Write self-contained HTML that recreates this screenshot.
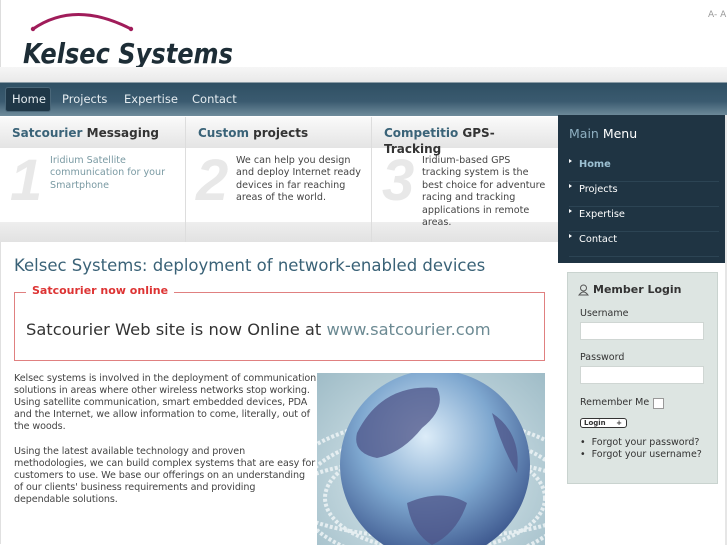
<!DOCTYPE html>
<html><head><meta charset="utf-8"><style>
*{margin:0;padding:0;box-sizing:border-box}
html,body{width:727px;height:545px;overflow:hidden}
body{background:#fff;font-family:"DejaVu Sans","Liberation Sans",sans-serif;position:relative;color:#333}
.abs{position:absolute}
#hdr{left:0;top:0;width:727px;height:68px;background:#fff;border-left:1px solid #ddd}
#band{left:0;top:67px;width:727px;height:15px;background:linear-gradient(#f6f6f6,#e9e9e9)}
#nav{left:0;top:82px;width:727px;height:34px;background:linear-gradient(#2f5064 0%,#3a5a6f 55%,#6f8c9c 100%);border-top:1px solid #8a9ca6}
#nav span{position:absolute;top:9px;font-size:11.5px;color:#e6edf1}
#home{left:5px;top:4px;width:46px;height:25px;background:#1f3747;border:1px solid #4a6779;border-radius:3px}
.col{top:117px;height:125px;background:#fff}
.ch{position:absolute;left:0;top:0;width:100%;height:31px;background:linear-gradient(#fafafa,#e4e4e4)}
.cb{position:absolute;left:0;bottom:0;width:100%;height:20px;background:linear-gradient(#eee,#e2e2e2)}
.ct{position:absolute;left:12px;top:8px;font-size:12px;font-weight:bold;color:#333;white-space:nowrap;line-height:16px}
.ct b{color:#3a6378}
.num{position:absolute;font:italic bold 58px "Liberation Sans",sans-serif;color:#e8e8e8;top:30px}
.cx{position:absolute;top:38px;font-size:9.6px;line-height:12.4px;color:#444}
#side{left:558px;top:115px;width:169px;height:148px;background:#1f3443}
#side .t{position:absolute;left:11px;top:11px;font-size:12.5px;color:#fff}
#side .t span{color:#8fb0c2}
.mi{position:absolute;left:11px;width:150px;height:25px;border-bottom:1px solid #2c4454;font-size:9.8px;color:#fff}
.mi:before{content:"";position:absolute;left:0;top:2px;border-left:3px solid #fff;border-top:2.5px solid transparent;border-bottom:2.5px solid transparent}
.mi span{position:absolute;left:10px;top:2px}
#login{left:567px;top:272px;width:151px;height:212px;background:#dde5e2;border:1px solid #c9d3cf}
#login .lt{position:absolute;left:25px;top:10px;font-size:11px;font-weight:bold;color:#333}
#login label{position:absolute;left:12px;font-size:9.5px;color:#333}
#login .in{position:absolute;left:12px;width:124px;height:18px;background:#fff;border:1px solid #cfd6d3}
#h1{left:14px;top:256px;font-size:16.5px;color:#3a6277}
#fs{left:14px;top:292px;width:531px;height:69px;border:1px solid #e08080}
#leg{left:26px;top:284px;background:#fff;padding:0 6px;font-size:11px;color:#d33;font-weight:bold}
#fst{left:26px;top:320px;font-size:16.3px;color:#333}
#fst span{color:#6c8a93}
#body{left:14px;top:373px;font-size:9.6px;line-height:12.1px;color:#444;letter-spacing:-0.1px;white-space:nowrap}
#img{left:317px;top:373px;width:228px;height:172px;overflow:hidden;background:radial-gradient(ellipse at 50% 60%,#dfe9ec 0%,#c4d8df 45%,#9fbcc7 100%)}
</style></head><body>
<div id="hdr" class="abs">
<svg class="abs" style="left:14px;top:8px" width="230" height="60">
<path d="M18 21 Q60 -8 116 21" fill="none" stroke="#a01c5a" stroke-width="3"/>
<circle cx="18" cy="21" r="2.2" fill="#a01c5a"/><circle cx="116" cy="21" r="2.2" fill="#a01c5a"/>
<text x="8" y="55" font-family="DejaVu Sans,sans-serif" font-style="italic" font-weight="bold" font-size="28" fill="#1d2d36" textLength="210" lengthAdjust="spacingAndGlyphs">Kelsec Systems</text>
</svg>
<div class="abs" style="left:707px;top:10px;font-size:9px;color:#999">A- A</div>
</div>
<div id="band" class="abs"></div>
<div id="nav" class="abs"><div id="home" class="abs"></div>
<span style="left:12px">Home</span><span style="left:62px">Projects</span><span style="left:124px">Expertise</span><span style="left:192px">Contact</span></div>

<div class="abs col" style="left:0;width:186px;border-right:1px solid #ddd"><div class="ch"></div><div class="cb"></div>
<div class="ct"><b>Satcourier</b> Messaging</div><div class="num" style="left:10px">1</div>
<div class="cx" style="left:50px;color:#7a9aa3">Iridium Satellite<br>communication for your<br>Smartphone</div></div>
<div class="abs col" style="left:186px;width:186px;border-right:1px solid #ddd"><div class="ch"></div><div class="cb"></div>
<div class="ct"><b>Custom</b> projects</div><div class="num" style="left:10px">2</div>
<div class="cx" style="left:50px">We can help you design<br>and deploy Internet ready<br>devices in far reaching<br>areas of the world.</div></div>
<div class="abs col" style="left:372px;width:186px"><div class="ch"></div><div class="cb"></div>
<div class="ct"><b>Competitio</b> GPS-<br>Tracking</div><div class="num" style="left:10px">3</div>
<div class="cx" style="left:50px;top:38px">Iridium-based GPS<br>tracking system is the<br>best choice for adventure<br>racing and tracking<br>applications in remote<br>areas.</div></div>

<div id="side" class="abs"><div class="t"><span>Main</span> Menu</div>
<div class="mi" style="top:42px"><span style="color:#9cc0d2;font-weight:bold">Home</span></div>
<div class="mi" style="top:67px"><span>Projects</span></div>
<div class="mi" style="top:92px"><span>Expertise</span></div>
<div class="mi" style="top:117px"><span>Contact</span></div></div>

<div id="login" class="abs">
<svg class="abs" style="left:10px;top:11px" width="11" height="12"><circle cx="5.5" cy="4" r="3" fill="none" stroke="#555"/><path d="M1 11 Q5.5 5 10 11Z" fill="none" stroke="#555"/></svg>
<div class="lt">Member Login</div>
<label style="top:35px">Username</label><div class="in" style="top:49px"></div>
<label style="top:79px">Password</label><div class="in" style="top:93px"></div>
<label style="top:124px">Remember Me</label><div class="abs" style="left:85px;top:125px;width:11px;height:11px;background:#fff;border:1px solid #999"></div>
<div class="abs" style="left:12px;top:145px;width:47px;height:10px;border:1px solid #333;border-radius:3px;background:#fff;font-size:7px;font-weight:bold;line-height:8px;padding-left:3px">Login <span style="float:right;margin-right:4px">+</span></div>
<div class="abs" style="left:12px;top:164px;font-size:9.5px;line-height:12px;color:#333">•&nbsp; Forgot your password?<br>•&nbsp; Forgot your username?</div>
</div>
<div class="abs" style="left:725px;top:115px;width:2px;height:430px;background:#e6e6e6"></div>
<div class="abs" style="left:0;top:242px;width:1px;height:302px;background:#e0e0e0"></div>

<div id="h1" class="abs">Kelsec Systems: deployment of network-enabled devices</div>
<div id="fs" class="abs"></div><div id="leg" class="abs">Satcourier now online</div>
<div id="fst" class="abs">Satcourier Web site is now Online at <span>www.satcourier.com</span></div>
<div id="body" class="abs">Kelsec systems is involved in the deployment of communication<br>solutions in areas where other wireless networks stop working.<br>Using satellite communication, smart embedded devices, PDA<br>and the Internet, we allow information to come, literally, out of<br>the woods.<br><br>Using the latest available technology and proven<br>methodologies, we can build complex systems that are easy for<br>customers to use. We base our offerings on an understanding<br>of our clients' business requirements and providing<br>dependable solutions.</div>
<div id="img" class="abs"><svg width="228" height="172">
<g fill="none" stroke="#eef4f6" stroke-width="4" stroke-dasharray="3 2" opacity=".85">
<ellipse cx="118" cy="125" rx="160" ry="80"/><ellipse cx="118" cy="125" rx="135" ry="66"/><ellipse cx="118" cy="125" rx="110" ry="53"/><ellipse cx="118" cy="125" rx="150" ry="40"/></g>
<defs><radialGradient id="g" cx="45%" cy="35%" r="65%"><stop offset="0" stop-color="#dcecf8"/><stop offset=".55" stop-color="#7ea7cf"/><stop offset="1" stop-color="#3f5a90"/></radialGradient></defs>
<circle cx="118" cy="92" r="95" fill="url(#g)"/>
<path d="M40 60 Q65 10 120 15 Q130 35 105 55 Q85 80 60 85 Q35 80 40 60Z M90 130 Q125 115 150 130 Q140 160 115 172 Q95 160 90 130Z M175 40 Q205 60 200 100 Q185 75 175 40Z" fill="#4e5488" opacity=".75"/>
</svg></div>
</body></html>
